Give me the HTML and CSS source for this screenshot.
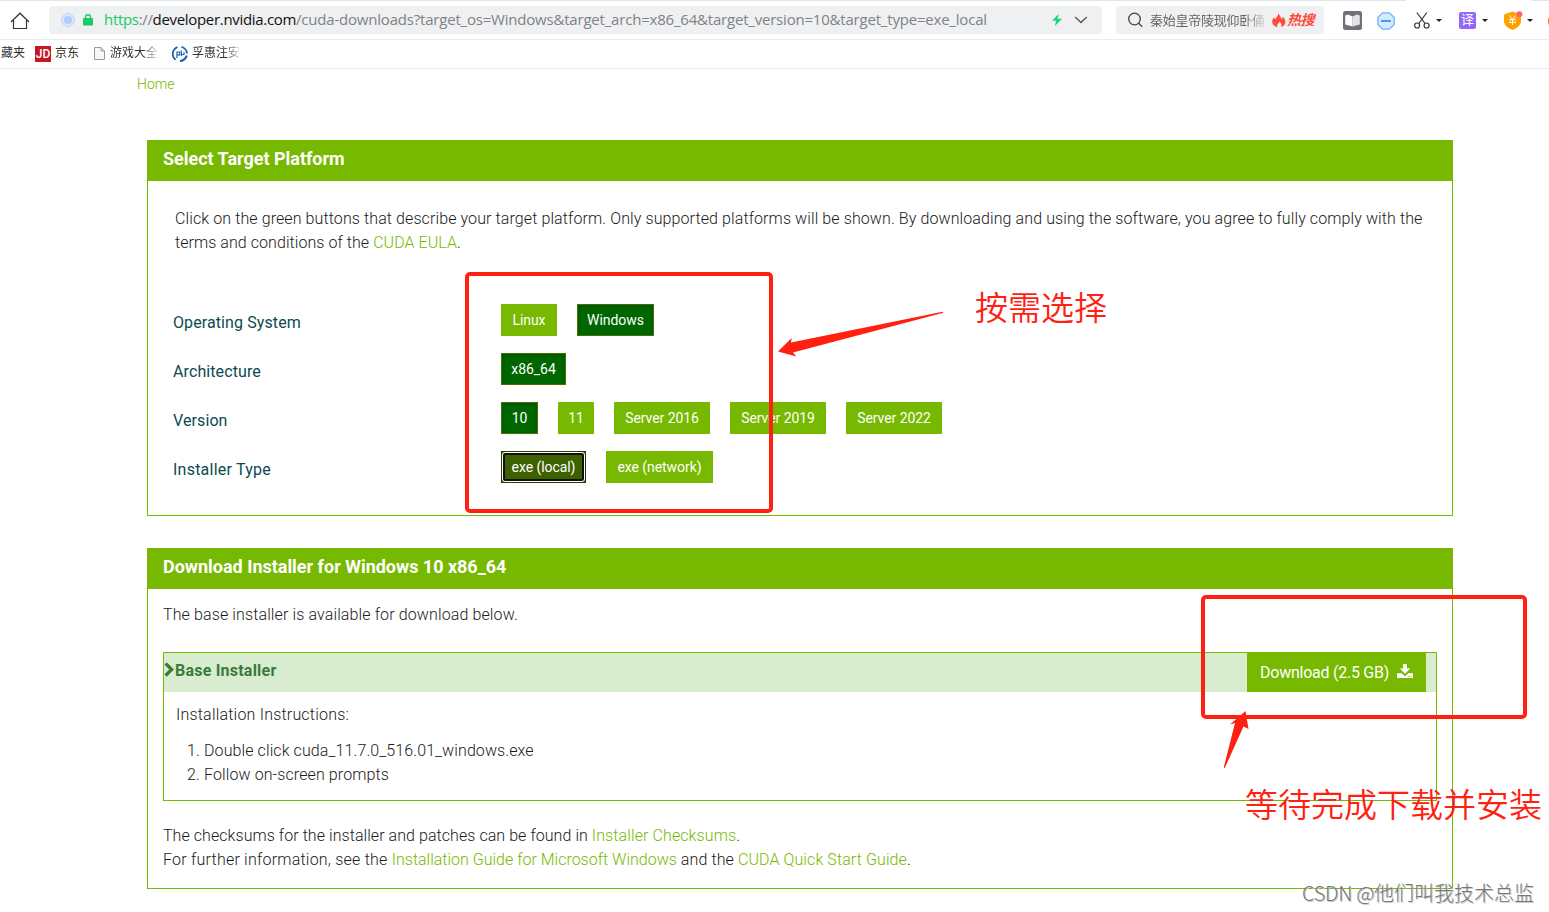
FILE: index.html
```html
<!DOCTYPE html>
<html lang="en">
<head>
    <meta charset="UTF-8">
    <meta name="viewport" content="width=device-width, initial-scale=1.0">
    <title>CUDA Toolkit Downloads</title>
    <link rel="stylesheet" href="styles.css">
</head>
<body>

<!-- Browser toolbar -->
<div class="toolbar">
    <svg class="home" width="20" height="18" viewBox="0 0 20 18" fill="none" stroke="#333" stroke-width="1.2">
        <path d="M1 10 L10 1.2 L19 10 M3.5 8 V16.5 H16.5 V8"/>
    </svg>
    <div class="address">
        <span class="dot"></span>
        <svg class="lock" width="10" height="12" viewBox="0 0 10 12">
            <rect x="0" y="4" width="10" height="7.5" rx="1" fill="#14cc66"/>
            <path d="M2.5 5 V3 a2.5 2.3 0 0 1 5 0 V5" fill="none" stroke="#14cc66" stroke-width="1.4"/>
        </svg>
        <span class="url"><span class="scheme">https</span><span class="slashes">://</span><span class="host">developer.nvidia.com</span><span class="path">/cuda-downloads?target_os=Windows&amp;target_arch=x86_64&amp;target_version=10&amp;target_type=exe_local</span></span>
        <svg class="bolt" width="10" height="12" viewBox="0 0 10 12">
            <path d="M6.5 0 L0 6.7 H4 L3 12 L10 4.8 H5.6 Z" fill="#1bd67c"/>
        </svg>
        <svg class="chevron" width="14" height="8" viewBox="0 0 14 8" fill="none" stroke="#555" stroke-width="1.3">
            <path d="M1.2 1 L7 6.5 L12.8 1"/>
        </svg>
    </div>
    <div class="search">
        <svg width="16" height="16" viewBox="0 0 16 16" fill="none" stroke="#444" stroke-width="1.3">
            <circle cx="6.5" cy="7" r="5.8"/>
            <path d="M10.7 11.2 L14.3 14.8"/>
        </svg>
        <span class="query">秦始皇帝陵现仰卧俑</span>
        <svg class="flame" width="14" height="14" viewBox="0 0 14 14">
            <path d="M6.5 0 C7 2.5 9.3 4 9.7 6.2 C10.5 5.5 10.7 4.6 10.6 3.6 C13 6 14 8.5 13 10.8 C12.3 12.6 10.8 13.6 9 14 C10 12.5 9.6 10.6 7.4 8.6 C7.2 10 5.8 10.6 5.3 11.8 C5 12.6 5.1 13.4 5.5 14 C2.8 13.5 0.7 11.8 0.3 9.4 C-0.1 7 1.1 5.3 2 4.2 C2.2 5.1 2.6 5.8 3.3 6.3 C4 4 6.5 2.8 6.5 0 Z" fill="#ff4b3e"/>
        </svg>
        <span class="hot">热搜</span>
    </div>
    <div class="tools">
        <svg class="tool-book" width="19" height="19" viewBox="0 0 19 19">
            <rect width="19" height="19" rx="2.5" fill="#6f7177"/>
            <path d="M2.2 4.5 L5 3.5 L9.5 5.5 V15.5 L2.2 13.5 Z" fill="#fff"/>
            <path d="M16.8 4.5 L14 3.5 L9.5 5.5 V15.5 L16.8 13.5 Z" fill="#e4e4e6"/>
        </svg>
        <svg class="tool-block" width="18" height="18" viewBox="0 0 18 18">
            <path d="M5.6 .8 H12.4 L17.2 5.6 V12.4 L12.4 17.2 H5.6 L.8 12.4 V5.6 Z" fill="#d5eaff" stroke="#6db3fc" stroke-width="1.3"/>
            <rect x="4" y="8" width="10" height="2" fill="#3e9bfa"/>
        </svg>
        <svg class="tool-cut" width="16" height="17" viewBox="0 0 16 17" fill="none" stroke="#333" stroke-width="1.2">
            <path d="M2.8 .5 L11 11.5 M12.8 .5 L4.8 11.5"/>
            <circle cx="3.1" cy="13.5" r="2.5"/>
            <circle cx="12.6" cy="13.5" r="2.5"/>
        </svg>
        <i class="caret"></i>
        <span class="tool-translate">译</span>
        <i class="caret"></i>
        <svg class="tool-shield" width="19" height="19" viewBox="0 0 19 19">
            <path d="M8.5 .5 L17 3.5 V10 C17 14.5 13 17 8.5 19 C4 17 0 14.5 0 10 V3.5 Z" fill="#ffa200"/>
            <path d="M5.5 4.5 L8.5 8.5 L11.5 4.5 M8.5 8.5 V14 M5 8.7 H12 M5 11.3 H12" fill="none" stroke="#fff"/>
            <circle cx="15.4" cy="3.2" r="3" fill="#ff6468"/>
        </svg>
        <i class="caret"></i>
        <span class="tool-next"></span>
    </div>
</div>

<!-- Bookmarks -->
<div class="bookmarks">
    <span class="mark mark-first">藏夹</span>
    <span class="mark"><span class="jd">JD</span>京东</span>
    <span class="mark mark-game">
        <svg width="11" height="13" viewBox="0 0 11 13" fill="#f7f7f7" stroke="#999">
            <path d="M.5 .5 H7 L10.5 4 V12.5 H.5 Z M7 .5 V4 H10.5"/>
        </svg>
        <span class="fade">游戏大全</span>
    </span>
    <span class="mark mark-fh">
        <svg width="16" height="16" viewBox="0 0 16 16" fill="none" stroke="#1c63b5">
            <path d="M5.5 1.2 A7.3 7.3 0 0 0 3.6 13.8" stroke-width="1.8"/>
            <path d="M9.5 .9 C12 1.5 14.8 4 15 7.5" stroke-width="1.8"/>
            <path d="M14.8 9.5 C14 12.5 11 15 8 15" stroke-width="2.2"/>
            <path d="M5 12 V6 H7.8 V8.8 H5" stroke-width="1.2"/>
            <path d="M9.4 4.5 V10 M9.4 8.5 H12 V6" stroke-width="1.1"/>
        </svg>
        <span class="fade">孚惠注安</span>
    </span>
</div>

<!-- Page -->
<div class="page">
    <a class="breadcrumb">Home</a>

    <div class="panel">
        <h2>Select Target Platform</h2>
        <p class="intro">Click on the green buttons that describe your target platform. Only supported platforms will be shown. By downloading and using the software, you agree to fully comply with the<br><span class="terms">terms and conditions of the <a>CUDA EULA</a>.</span></p>
        <div class="options">
            <div class="row">
                <span class="label">Operating System</span>
                <button class="btn w-linux">Linux</button>
                <button class="btn selected w-windows">Windows</button>
            </div>
            <div class="row">
                <span class="label">Architecture</span>
                <button class="btn selected w-arch">x86_64</button>
            </div>
            <div class="row">
                <span class="label">Version</span>
                <button class="btn selected w-10">10</button>
                <button class="btn w-11">11</button>
                <button class="btn w-server">Server 2016</button>
                <button class="btn w-server">Server 2019</button>
                <button class="btn w-server">Server 2022</button>
            </div>
            <div class="row">
                <span class="label label-type">Installer Type</span>
                <button class="btn focused w-local">exe (local)</button>
                <button class="btn w-network">exe (network)</button>
            </div>
        </div>
    </div>

    <div class="panel panel-download">
        <h2>Download Installer for Windows 10 x86_64</h2>
        <p class="available">The base installer is available for download below.</p>
        <div class="installer">
            <div class="installer-head">
                <svg width="11" height="15" viewBox="0 0 11 15" fill="none" stroke="#3b7a3b" stroke-width="3.2">
                    <path d="M1.6 1.5 L7.7 7.5 L1.6 13.5"/>
                </svg>
                <h3>Base Installer</h3>
                <button class="download">
                    <span>Download (2.5 GB)</span>
                    <svg width="16" height="14" viewBox="0 0 16 14" fill="#fff">
                        <path d="M6 0 H10 V4.5 H13.2 L8 9.7 L2.8 4.5 H6 Z"/>
                        <path d="M0 9.3 H4.6 L8 12.2 L11.4 9.3 H16 V14 H0 Z"/>
                        <path d="M11.5 12 h1 v1 h-1 Z M13.7 12 h1 v1 h-1 Z" fill="#76b900"/>
                    </svg>
                </button>
            </div>
            <div class="installer-body">
                <p>Installation Instructions:</p>
                <ol>
                    <li>Double click cuda_11.7.0_516.01_windows.exe</li>
                    <li>Follow on-screen prompts</li>
                </ol>
            </div>
        </div>
        <p class="more"><span class="terms">The checksums for the installer and patches can be found in </span><a>Installer Checksums</a>.<br><span class="further">For further information, see the </span><a class="guide">Installation Guide for Microsoft Windows</a> and the <a>CUDA Quick Start Guide</a>.</p>
    </div>
</div>

<!-- Annotations drawn over the page -->
<div class="box box-options"></div>
<div class="box box-download"></div>
<svg class="arrow arrow-options" width="167" height="47" viewBox="0 0 167 47">
    <path d="M0 41.5 L13.7 28 L13 32.5 L164.5 1.8 Q166 2.5 164.5 3 L15 42.5 L18.5 46.5 Z" fill="#ff2012"/>
</svg>
<svg class="arrow arrow-download" width="26" height="58" viewBox="0 0 26 58">
    <path d="M22.5 0 L25.5 18 L20.5 15.5 L2 56.5 Q.5 58 1 55.5 L12 12 L7 13.5 Z" fill="#ff2012"/>
</svg>
<div class="note note-options">按需选择</div>
<div class="note note-download">等待完成下载并安装</div>
<div class="watermark"><span>CSDN @</span>他们叫我技术总监</div>

</body>
</html>
```

FILE: styles.css
```css
* {
    box-sizing: border-box;
}
body {
    font-family: Roboto, "Noto Sans CJK SC", sans-serif;
    margin: 0;
    height: 912px;
    background-color: white;
    color: #1a1a1a;
    position: relative;
    overflow: hidden;
}
p, h2, h3, ol {
    margin: 0;
}
a {
    color: #76b900;
}
svg {
    display: block;
    flex: none;
}

/* browser toolbar */
.toolbar {
    height: 40px;
    border-bottom: 1px solid #ebebed;
    background: linear-gradient(#e3e6eb, #e3e6eb) 0 0 / 1406px 1px no-repeat,
                linear-gradient(#e3e6eb, #e3e6eb) 1531px 0 / 18px 1px no-repeat;
    display: flex;
    align-items: center;
    padding: 1px 0 0 10px;
}
.home {
    margin-right: 19px;
    margin-top: 1px;
}
.address, .search {
    height: 28px;
    background-color: #eff0f2;
    border-radius: 4px;
    display: flex;
    align-items: center;
}
.address {
    width: 1053px;
    padding-left: 13px;
}
.dot {
    width: 12px;
    height: 12px;
    border-radius: 50%;
    border: 2px solid #d8e5fb;
    outline: 1px solid #bdd3f8;
    background-color: #b4cdfb;
}
.lock {
    margin: 0 10px 1px 9px;
}
.url {
    font: 15px "Open Sans", sans-serif;
    width: 887px;
    margin: 0 0 2px 1px;
    letter-spacing: -0.2px;
    white-space: nowrap;
    color: #808285;
}
.scheme {
    color: #14cc66;
}
.scheme, .slashes, .host {
    letter-spacing: -0.32px;
}
.host {
    color: #111;
}
.bolt {
    margin-left: 61px;
}
.chevron {
    margin-left: 12px;
}
.search {
    width: 208px;
    margin-left: 14px;
    padding-left: 12px;
}
.query {
    font-size: 13px;
    width: 116px;
    margin: 0 0 2px 6px;
    letter-spacing: -0.25px;
    white-space: nowrap;
    color: #666;
    -webkit-mask-image: linear-gradient(to right, #000 82%, rgba(0, 0, 0, 0.1));
    mask-image: linear-gradient(to right, #000 82%, rgba(0, 0, 0, 0.1));
}
.flame {
    margin-left: 6px;
}
.hot {
    font-size: 14px;
    font-weight: bold;
    font-style: italic;
    margin: 0 0 2px 1px;
    letter-spacing: -0.5px;
    white-space: nowrap;
    color: #ff4b3e;
}
.tools {
    flex: 1;
    display: flex;
    align-items: center;
    margin-left: 19px;
    padding-top: 1px;
    overflow: hidden;
}
.tool-block {
    margin-left: 15px;
}
.tool-cut {
    margin-left: 19px;
}
.caret {
    border: 3px solid transparent;
    border-top-color: #222;
    border-bottom: 0;
    margin-left: 6px;
}
.tool-translate {
    flex: none;
    width: 17px;
    height: 17px;
    margin-left: 17px;
    border-radius: 2px;
    background-color: #9566ff;
    color: white;
    font-size: 13px;
    line-height: 16px;
    text-align: center;
}
.tool-shield {
    margin-left: 16px;
}
.tool-shield + .caret {
    margin-left: 4px;
}
.tool-next {
    flex: none;
    width: 12px;
    height: 14px;
    margin-left: 15px;
    border-radius: 6px;
    background-color: #ff7a1c;
}

/* bookmarks */
.bookmarks {
    height: 29px;
    border-bottom: 1px solid #ebebed;
    padding-bottom: 1px;
    display: flex;
    align-items: center;
    font-size: 12px;
    line-height: 17px;
    color: #333;
    white-space: nowrap;
}
.mark {
    display: flex;
    align-items: center;
    margin-left: 10px;
}
.mark-first {
    margin-left: 1px;
}
.mark-game {
    margin-left: 15px;
}
.mark-fh {
    margin-left: 14px;
}
.jd {
    width: 16px;
    height: 16px;
    margin-right: 4px;
    background-color: #c81623;
    color: white;
    font-weight: 500;
    line-height: 17px;
    text-align: center;
}
.fade {
    margin-left: 5px;
    -webkit-mask-image: linear-gradient(to right, #000 70%, rgba(0, 0, 0, 0.1));
    mask-image: linear-gradient(to right, #000 70%, rgba(0, 0, 0, 0.1));
}
.mark-fh .fade {
    margin-left: 4px;
}

/* page content */
.page {
    width: 1306px;
    margin-left: 147px;
    font-size: 16px;
    font-weight: 300;
    line-height: 24px;
    letter-spacing: 0.1px;
}
.breadcrumb {
    display: block;
    height: 71px;
    margin-left: -10px;
    padding-top: 3px;
    font-size: 14px;
    letter-spacing: 0;
}
.panel {
    height: 376px;
    border: 1px solid #76b900;
}
.panel-download {
    height: 341px;
    margin-top: 32px;
}
.panel h2 {
    height: 40px;
    padding: 6px 15px;
    background-color: #76b900;
    color: white;
    font-size: 18px;
    font-weight: 700;
    letter-spacing: -0.02px;
}
.intro {
    padding: 26px 0 0 27px;
    white-space: nowrap;
}
.terms {
    letter-spacing: 0.06px;
}
.options {
    padding: 49px 0 0 25px;
    display: grid;
    row-gap: 17px;
}
.row {
    display: flex;
    column-gap: 20px;
    height: 32px;
}
.label {
    width: 308px;
    padding-top: 7px;
    font-weight: 400;
    color: #0c4a50;
}
.label-type {
    letter-spacing: 0.23px;
}
.btn {
    height: 32px;
    border: 1px solid #76b900;
    padding: 0;
    background-color: #76b900;
    color: white;
    font: 14px Roboto, sans-serif;
    letter-spacing: -0.06px;
}
.selected {
    background-color: #060;
    border-color: #467000;
    box-shadow: inset 0 2px 4px rgba(0, 0, 0, 0.2);
}
.focused {
    position: relative;
    background-color: #3e6100;
    border-color: #263c00;
}
/* focus ring inside the button */
.focused::after {
    content: "";
    position: absolute;
    inset: 0;
    border: 1px solid white;
    border-radius: 3px;
    box-shadow: inset 0 0 0 2px #101010;
}
.w-linux { width: 56px; }
.w-windows { width: 77px; }
.w-arch { width: 65px; }
.w-10 { width: 37px; }
.w-11 { width: 36px; }
.w-server { width: 96px; }
.w-local { width: 85px; }
.w-network { width: 107px; }

.available {
    padding: 14px 15px 0;
    letter-spacing: 0.12px;
}
.installer {
    height: 149px;
    margin: 25px 15px 0;
    border: 1px solid #76b900;
}
.installer-head {
    height: 39px;
    display: flex;
    background-color: #d8ecd0;
    color: #3b7a3b;
}
.installer-head > svg {
    margin-top: 9px;
}
.installer-head h3 {
    padding-top: 6px;
    font-size: 16px;
    font-weight: 700;
    line-height: 24px;
    letter-spacing: 0.22px;
}
.download {
    width: 179px;
    height: 40px;
    margin: -1px 10px 0 auto;
    border: 0;
    padding: 0 0 0 13px;
    display: flex;
    align-items: center;
    background-color: #76b900;
    color: white;
    font: 16px Roboto, sans-serif;
    letter-spacing: -0.25px;
}
.download svg {
    margin: 0 0 2px 8px;
}
.installer-body {
    padding: 11px 12px;
}
.installer-body p {
    letter-spacing: 0.2px;
}
.installer-body ol {
    margin-top: 12px;
    padding-left: 28px;
}
.more {
    padding: 23px 15px 0;
}
.further {
    letter-spacing: 0.22px;
}
.guide {
    letter-spacing: 0;
}

/* annotations */
.box {
    position: absolute;
    border: 4px solid #ff2012;
    border-radius: 5px;
}
.box-options {
    left: 465px;
    top: 272px;
    width: 308px;
    height: 241px;
}
.box-download {
    left: 1201px;
    top: 595px;
    width: 326px;
    height: 124px;
}
.arrow {
    position: absolute;
}
.arrow-options {
    left: 778px;
    top: 310px;
}
.arrow-download {
    left: 1223px;
    top: 711px;
}
.note {
    position: absolute;
    font: 350 33px/40px "Noto Sans CJK SC", sans-serif;
    color: #ff2012;
    white-space: nowrap;
}
.note-options {
    left: 975px;
    top: 286px;
}
.note-download {
    left: 1245px;
    top: 783px;
}
.watermark {
    position: absolute;
    left: 1302px;
    top: 880px;
    font: 300 20px/26px "Noto Sans CJK SC", sans-serif;
    color: #777;
    text-shadow: 1px 1px 0 #ccc;
    white-space: nowrap;
}
.watermark span {
    letter-spacing: -0.3px;
}
```
